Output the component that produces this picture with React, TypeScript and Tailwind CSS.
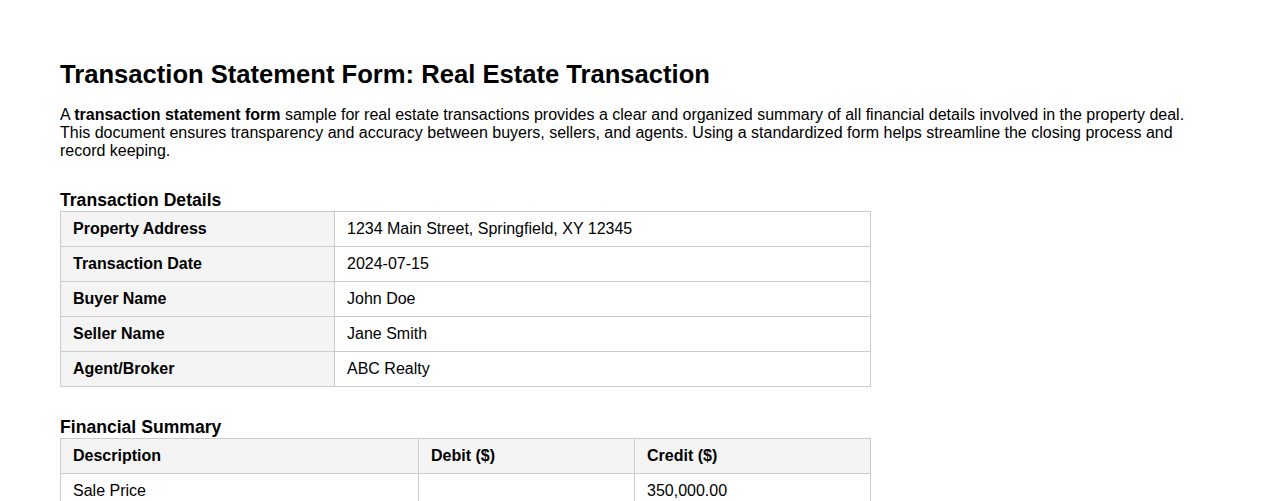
import React from "react";

const details = [
  ["Property Address", "1234 Main Street, Springfield, XY 12345"],
  ["Transaction Date", "2024-07-15"],
  ["Buyer Name", "John Doe"],
  ["Seller Name", "Jane Smith"],
  ["Agent/Broker", "ABC Realty"],
];

const cell = "border border-[#cccccc] px-[12px] py-[8px] text-left align-top";

const App = () => {
  return (
    <div className="bg-white text-black pl-[60px] pr-[60px] pt-[59px] pb-10 font-['Liberation_Sans',Arial,sans-serif] min-h-screen">
      <h1 className="text-[25.6px] font-bold leading-[30px] mb-[17px]">
        Transaction Statement Form: Real Estate Transaction
      </h1>
      <p className="text-[16px] leading-[18px] max-w-[1150px] mb-[30px]">
        A <strong>transaction statement form</strong> sample for real estate
        transactions provides a clear and organized summary of all financial
        details involved in the property deal. This document ensures
        transparency and accuracy between buyers, sellers, and agents. Using a
        standardized form helps streamline the closing process and record
        keeping.
      </p>

      <h2 className="text-[17.6px] font-bold leading-[20px] mb-[1px]">
        Transaction Details
      </h2>
      <table className="w-[811px] border-collapse text-[16px] leading-[18px] mb-[30px] table-fixed">
        <colgroup>
          <col className="w-[274px]" />
          <col />
        </colgroup>
        <tbody>
          {details.map(([k, v]) => (
            <tr key={k}>
              <th className={`${cell} bg-[#f4f4f4] font-bold`}>{k}</th>
              <td className={cell}>{v}</td>
            </tr>
          ))}
        </tbody>
      </table>

      <h2 className="text-[17.6px] font-bold leading-[20px] mb-[1px]">
        Financial Summary
      </h2>
      <table className="w-[811px] border-collapse text-[16px] leading-[18px] table-fixed">
        <colgroup>
          <col className="w-[358px]" />
          <col className="w-[216px]" />
          <col />
        </colgroup>
        <thead>
          <tr>
            <th className={`${cell} bg-[#f4f4f4] font-bold`}>Description</th>
            <th className={`${cell} bg-[#f4f4f4] font-bold`}>Debit ($)</th>
            <th className={`${cell} bg-[#f4f4f4] font-bold`}>Credit ($)</th>
          </tr>
        </thead>
        <tbody>
          <tr>
            <td className={cell}>Sale Price</td>
            <td className={cell}></td>
            <td className={cell}>350,000.00</td>
          </tr>
          <tr>
            <td className={cell}>Earnest Money Deposit</td>
            <td className={cell}></td>
            <td className={cell}>10,000.00</td>
          </tr>
        </tbody>
      </table>
    </div>
  );
};

export default App;
